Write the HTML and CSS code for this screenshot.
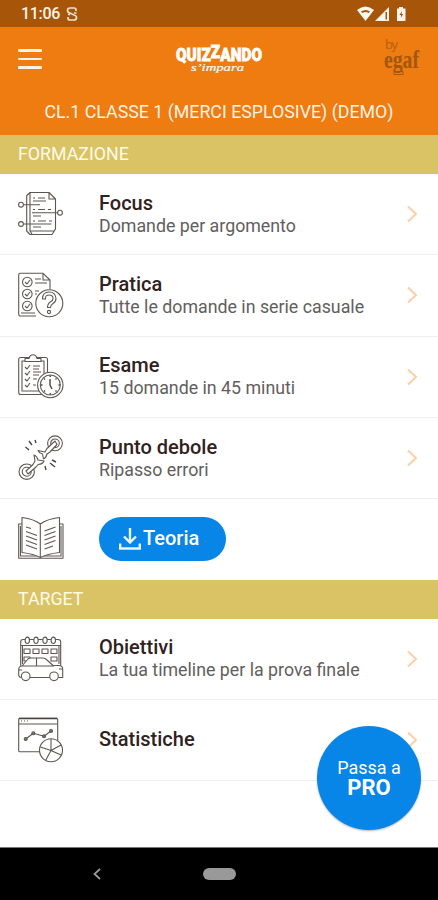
FILE: index.html
```html
<!DOCTYPE html>
<html lang="it">
<head>
<meta charset="utf-8">
<title>Quizzando</title>
<link rel="stylesheet" href="styles.css">
</head>
<body>
<div class="app">
  <div class="status">
    <span class="time">11:06</span>
    <svg class="s-icon" width="12" height="14" viewBox="0 0 12 14"><path d="M10 4V3Q10 1 8 1H4Q1.500 1 1.500 3.500Q1.500 5.500 4 6L8 8Q10.500 8.500 10.500 10.500Q10.500 13 8 13H4Q2 13 2 11V10M2 7.500H4M8 6H10.500"/></svg>
    <svg class="signals" width="52" height="16" viewBox="0 0 52 16"><path d="M0 4Q8.500-3 17 4L8.500 15Z"/><path class="cut" d="M4 5.500Q8.500 2.500 13 5.500L11.500 7Q8.500 5 5.500 7Z"/><path d="M18 15L32 1V15Z"/><path class="cut" d="M28.500 6H30V13.500H28.500Z"/><path d="M40 2.500H42V1H46V2.500H48.500V15H40Z"/><path class="cut" d="M45 5L42.500 9H44.200L43.700 12L46.300 8H44.600Z"/></svg>
  </div>
  <header class="header">
    <div class="bar">
      <div class="menu"><i></i><i></i><i></i></div>
      <svg class="logo" width="90" height="32" viewBox="0 0 90 32">
        <text class="brand" x="1" y="18" textLength="86" lengthAdjust="spacingAndGlyphs">QUIZ<tspan dy="-3">Z</tspan><tspan dy="3">ANDO</tspan></text>
        <text class="script" x="16" y="28" textLength="53" lengthAdjust="spacingAndGlyphs">s’impara</text>
      </svg>
      <svg class="egaf" width="38" height="38" viewBox="0 0 38 38">
        <text class="by" x="1" y="9" textLength="13">by</text>
        <text class="name" x="0" y="28" textLength="35" lengthAdjust="spacingAndGlyphs">egaf</text>
        <path d="M10 31.500H19V34.500H10Z"/>
      </svg>
    </div>
    <h1><span>CL.1 CLASSE 1 (MERCI ESPLOSIVE) (DEMO)</span></h1>
  </header>

  <h2 class="band"><span>FORMAZIONE</span></h2>
  <div class="row">
    <svg class="ico" viewBox="0 0 46 46"><path d="M12 1.500H31L37.500 8V38L34 43.500H12L8.700 40V4.500ZM12 1.500V40L14 43M31 1.500V8H37.500M12 40H36"/><path d="M5.500 13.700H22M14 21.700H39.500M5.500 33H33.500M15 10H28M15 25H23M15 36H23M15 7H17M20 7H27M15 18.500H17M20 18.500H27M30 18.500H33M15 30H17M20 30H28M31 30H34"/><circle cx="3" cy="13.700" r="2.400"/><circle cx="42" cy="21.700" r="2.400"/><circle cx="3" cy="33" r="2.400"/></svg>
    <div class="txt"><b>Focus</b><p>Domande per argomento</p></div><svg class="chev" viewBox="0 0 12 18"><path d="M2 1.500L10 9L2 16.500"/></svg>
  </div>
  <div class="row">
    <svg class="ico" viewBox="0 0 46 46"><path d="M18 44H2Q.7 44 .7 42V3Q.7 1.300 2 1.300H25L32 8V17M25 1.300V8H32M17 7H23M17 11H29M17 19H21M17 22H19M3 41H17"/><circle cx="9.300" cy="10" r="4.800"/><circle cx="9.300" cy="22" r="4.800"/><circle cx="9.300" cy="34" r="4.800"/><path d="M7 10L9 12L12 8M7 22L9 24L12 20M7 34L9 36L12 32"/><circle class="w" cx="31.300" cy="31.300" r="13.500"/><path d="M24.500 27Q24.500 20 31 20T38 26.500Q38 30 35 31.500Q32.500 33 32.500 35.500H29.500Q29.500 31.500 33 29.500Q35 28.500 35 26.500Q35 23 31 23T27.500 27Z"/><circle cx="31" cy="40" r="1.600"/></svg>
    <div class="txt"><b>Pratica</b><p>Tutte le domande in serie casuale</p></div><svg class="chev" viewBox="0 0 12 18"><path d="M2 1.500L10 9L2 16.500"/></svg>
  </div>
  <div class="row">
    <svg class="ico" viewBox="0 0 46 46"><rect x=".7" y="3.500" width="28.800" height="37" rx="2"/><path d="M4 7H26V37H4Z"/><path class="w" d="M7 7.500V4.500H11Q12 .7 15 .7T19 4.500H23V7.500Z"/><path d="M7 13L9 15L12 11M7 19L9 21L12 17M7 25L9 27L12 23M7 31L9 33L12 29M15 12H22M15 15H21M15 18H23M15 21H21M15 25H19M15 31H18"/><circle class="w" cx="32.300" cy="31" r="12.700"/><circle cx="32.300" cy="31" r="10"/><path class="thick" d="M32 25V31L34 35M32.300 21.500V23M32.300 39V40.500M23 31H24.500M40.500 31H42M26 24.500L27 25.500M38.500 24.500L37.500 25.500M26 37.500L27 36.500M38.500 37.500L37.500 36.500"/></svg>
    <div class="txt"><b>Esame</b><p>15 domande in 45 minuti</p></div><svg class="chev" viewBox="0 0 12 18"><path d="M2 1.500L10 9L2 16.500"/></svg>
  </div>
  <div class="row">
    <svg class="ico" viewBox="0 0 46 46"><circle cx="37" cy="8.300" r="7.400"/><circle cx="37" cy="8.300" r="4.300"/><circle cx="8.700" cy="36.700" r="7.700"/><circle cx="8.700" cy="36.700" r="4.500"/><path class="w" d="M37 6L29 13.500L27 17L20 15.500Q21 18 24.500 19L25.500 24Q28 23 29 19L32 17L39 9.500ZM8 36L15 29.500L17 26L16 20Q19 21 20 25L26 26Q25 29 20 29.500L18 32L10 39Z"/><path class="thick" d="M11 6L14 10M7.500 12L11 15M17 5L18 8M27 31L28 35M32 28L37 32M34 25L38 27"/></svg>
    <div class="txt"><b>Punto debole</b><p>Ripasso errori</p></div><svg class="chev" viewBox="0 0 12 18"><path d="M2 1.500L10 9L2 16.500"/></svg>
  </div>
  <div class="row last">
    <svg class="ico" viewBox="0 0 46 46"><path d="M4 8H.7V42.300H45V8H41.500M2.500 10V40H20M43 10V40H25"/><path class="w" d="M4 1.500Q16 3 22.300 8Q29 3 41.500 1.500V36.500Q29 38 22.300 41.500Q16 38 4 36.500ZM22.300 8V41.500"/><path d="M8 11L13 12.500M8 15.500L19 19.500M8 20L19 24M8 24.500L19 28.500M8 29L19 33M26.500 15L37.500 11M26.500 19.500L37.500 15.500M26.500 24L37.500 20M26.500 28.500L37.500 24.500M26.500 33L35 30"/></svg>
    <div class="pill"><svg width="22" height="22" viewBox="0 0 22 22"><path d="M11 0V13.500M5 8.500L11 14.500L17 8.500M1.200 15.500V20.500H20.800V15.500"/></svg><span>Teoria</span></div>
  </div>

  <h2 class="band"><span>TARGET</span></h2>
  <div class="row">
    <svg class="ico" viewBox="0 0 46 46"><path d="M2.700 30V6Q2.700 3.500 5 3.500H40Q42.700 3.500 42.700 6V30M2.700 9.500H42.700M4.500 9.500V28M41 9.500V28"/><g class="w"><ellipse cx="9.300" cy="4.300" rx="2.200" ry="3.200"/><ellipse cx="18" cy="4.300" rx="2.200" ry="3.200"/><ellipse cx="27" cy="4.300" rx="2.200" ry="3.200"/><ellipse cx="35.300" cy="4.300" rx="2.200" ry="3.200"/></g><path d="M6 13H12V17.500H6ZM15 13H21V17.500H15ZM24 13H30V17.500H24ZM33 13H39V17.500H33ZM6 21H12V25H6ZM33 21H39V25H33Z"/><path class="w" d="M3.500 41.500Q.7 41.500 .7 39V34Q.7 30 4 30L10 23Q11 22 13 22H25Q27 22 29 24L35 29.500H41Q44.700 30 44.700 33V41.500ZM4 30H36M18.500 22V30M1 34H4M41 33H44"/><circle class="w" cx="7.700" cy="40.300" r="4.300"/><circle class="w" cx="36" cy="40.300" r="4.300"/></svg>
    <div class="txt"><b>Obiettivi</b><p>La tua timeline per la prova finale</p></div><svg class="chev" viewBox="0 0 12 18"><path d="M2 1.500L10 9L2 16.500"/></svg>
  </div>
  <div class="row final">
    <svg class="ico" viewBox="0 0 46 46"><rect x=".7" y="1.200" width="39" height="33.500" rx="1"/><path d="M.7 7H39.700M3 4H4M6 4H7M9 4H10M7.700 22L15.300 16.300L26 19.300L33 14"/><path class="thick" d="M1 1.500H39"/><g class="dot"><circle cx="7.700" cy="22" r="1.500"/><circle cx="15.300" cy="16.300" r="1.500"/><circle cx="26" cy="19.300" r="1.500"/><circle cx="33" cy="14" r="1.500"/></g><circle class="w" cx="33" cy="33.300" r="11.500"/><path d="M33 22V33.500L22.500 30M33 33.500L43 28M33 33.500L27.500 43.500M33 33.500L43 38"/></svg>
    <div class="txt single"><b>Statistiche</b></div><svg class="chev" viewBox="0 0 12 18"><path d="M2 1.500L10 9L2 16.500"/></svg>
  </div>
  <div class="fab"><span>Passa a</span><b>PRO</b></div>
  <nav class="nav">
    <svg width="8" height="12" viewBox="0 0 8 12"><path d="M7 1L1.500 6L7 11"/></svg>
    <i></i>
  </nav>
</div>
</body>
</html>
```
FILE: styles.css
```css
* { box-sizing: border-box; margin: 0; padding: 0; }
body { font-family: Roboto, sans-serif; background: #fff; overflow: hidden; }
.app { position: relative; width: 438px; height: 900px; display: flex; flex-direction: column; }
.status { height: 27px; background: #a75509; display: flex; align-items: center; padding: 0 29px 0 21px; color: #fff3e8; flex: none; }
.time { font-size: 16px; font-weight: 500; width: 37px; margin-right: 8px; white-space: nowrap; letter-spacing: -.3px; }
.s-icon { fill: none; stroke: #f5dfcd; stroke-width: 1.7; }
.signals { margin-left: auto; fill: #fff6ee; }
.signals .cut { fill: #a75509; }
.header { height: 108px; background: #ee7c10; flex: none; }
.bar { height: 64px; padding: 0 16px 0 18px; display: flex; align-items: center; justify-content: space-between; }
.menu { width: 24px; display: flex; flex-direction: column; gap: 5.500px; }
.menu i { height: 2.800px; background: #fff3e8; border-radius: 1px; }
.logo { margin-left: 133px; margin-right: auto; overflow: visible; }
.brand { font: 900 18.500px Roboto, sans-serif; fill: #fff; stroke: #fff; stroke-width: .8; }
.script { font: italic 400 11px "Liberation Serif", serif; fill: #fff; stroke: #fff; stroke-width: .2; }
.egaf { overflow: visible; }
.by { font: 13px "Open Sans", sans-serif; fill: #b8600f; }
.name { font: bold 25px "Liberation Serif", serif; fill: #a3560f; }
.egaf path { fill: none; stroke: #a3560f; }
h1 { font-weight: 400; font-size: 17.800px; line-height: 42px; text-align: center; color: #fff1e3; white-space: nowrap; }
.band { flex: none; height: 39px; line-height: 38px; background: #dac364; color: #fffbe8; font-size: 17.800px; font-weight: 400; padding-left: 18px; }
.row { flex: none; height: 81.300px; border-bottom: 1px solid #eee; display: flex; align-items: center; padding: 0 20px 0 18px; }
.row.last { border: 0; height: 80.600px; }
.row.final { height: 80.700px; }
.ico { width: 46px; height: 46px; margin-right: 35px; flex: none; fill: none; stroke: #5d5753; stroke-width: 1.1; stroke-linejoin: round; }
.ico .w { fill: #fff; }
.ico .thick { stroke-width: 1.4; stroke: #49423e; }
.ico .dot { fill: #777; }
.txt { flex: 1; white-space: nowrap; color: #2f2220; }
.txt b { display: block; font-weight: 500; font-size: 20px; line-height: 22px; }
.txt p { font-size: 17.800px; line-height: 23px; color: #625e5e; font-weight: 400; }
.txt.single { padding-bottom: 2px; }
.chev { width: 12px; height: 18px; fill: none; stroke: #fbd0a8; stroke-width: 2; }
.pill { width: 127px; height: 44px; border-radius: 22px; background: #0786e8; display: flex; align-items: center; padding-left: 20px; gap: 2px; color: #fff; font-size: 20px; font-weight: 500; }
.pill span { position: relative; top: -1px; }
.pill svg { fill: none; stroke: #e8f4ff; stroke-width: 2.4; }
.fab { position: absolute; left: 317px; top: 726px; width: 104px; height: 104px; border-radius: 50%; background: #0786e8; color: #fff; display: flex; flex-direction: column; align-items: center; justify-content: center; line-height: 20px; font-size: 18px; box-shadow: 0 1px 2px #6667; }
.fab b { font-size: 22px; font-weight: 700; }
.nav { margin-top: auto; height: 53px; flex: none; background: #000; border-top: 1px solid #777; display: flex; align-items: center; padding-left: 93px; }
.nav svg { fill: none; stroke: #999; stroke-width: 1.8; }
.nav i { width: 33px; height: 12px; border-radius: 6px; background: #999; margin-left: 102px; }
```
